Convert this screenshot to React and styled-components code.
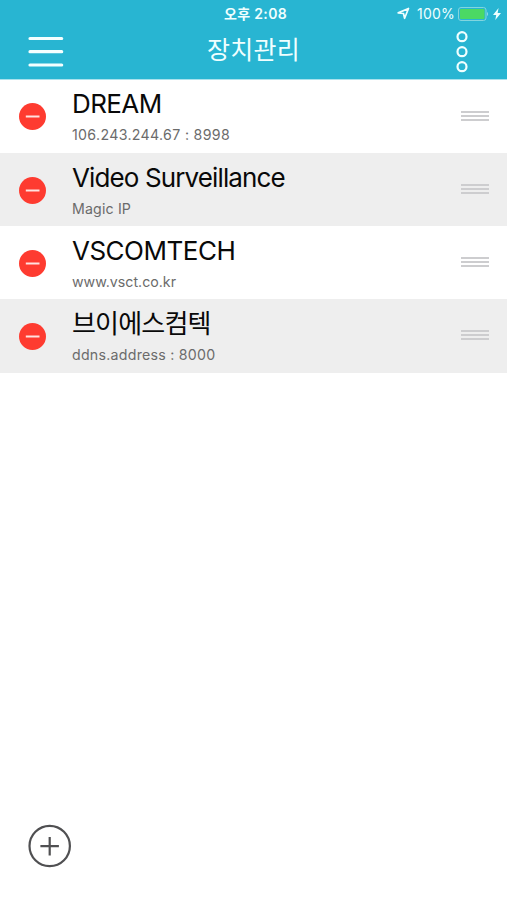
import React from "react";
import styled, { createGlobalStyle } from "styled-components";

const GlobalStyle = createGlobalStyle`
  * { box-sizing: border-box; }
  body {
    margin: 0;
    background: #fff;
    font-family: Inter, "Noto Sans CJK KR", sans-serif;
  }
  button { border: 0; padding: 0; background: none; font: inherit; }
  svg { display: block; }
`;

const Screen = styled.main`
  display: flex;
  flex-direction: column;
  width: 100%;
  height: 900px;
  overflow: hidden;
  background: #fff;
`;

const Header = styled.header`
  height: 79.5px;
  flex: none;
  background: #28b5d2;
  border-bottom: 1px solid #a9e2ed;
  color: #f0ffff;
`;

const StatusBar = styled.div`
  display: grid;
  grid-template-columns: 1fr auto 1fr;
  align-items: center;
  height: 27px;
  padding: 0 6px 0 6px;
`;

const Clock = styled.time`
  grid-column: 2;
  padding-left: 4px;
  font-size: 14px;
  font-weight: 600;
  line-height: 20px;
  letter-spacing: 0.35px;
  white-space: nowrap;
`;

const StatusIcons = styled.div`
  display: flex;
  justify-content: flex-end;
  align-items: center;
`;

const Percent = styled.span`
  margin: 0 3px 0 7px;
  font-size: 14px;
  line-height: 20px;
  letter-spacing: 0.2px;
`;

const NavBar = styled.div`
  display: grid;
  grid-template-columns: 91px 1fr 91px;
  align-items: center;
  justify-items: center;
  height: 49px;
`;

const Title = styled.h1`
  margin: 0;
  padding-bottom: 3px;
  font-size: 25px;
  font-weight: 400;
  line-height: 40px;
  letter-spacing: 0.3px;
`;

const DeviceList = styled.ul`
  margin: 0;
  padding: 0;
  list-style: none;
`;

const DeviceRow = styled.li`
  display: grid;
  grid-template-columns: 72px 1fr 46px;
  height: 73.25px;
  background: ${(p) => (p.$shaded ? "#eeeeee" : "#ffffff")};
`;

const RemoveButton = styled.button`
  align-self: start;
  margin: 23.8px 0 0 19px;
  width: 27px;
  height: 27px;
`;

const DeviceInfo = styled.div`
  padding-top: 7.8px;
  white-space: nowrap;
`;

const DeviceName = styled.div`
  color: #090909;
  font-size: 26px;
  line-height: 34px;
  height: 34px;
  letter-spacing: ${(p) => p.$tracking};
`;

const DeviceAddress = styled.div`
  margin-top: 4px;
  color: #6b6b6b;
  font-size: 14.2px;
  line-height: 20px;
  letter-spacing: ${(p) => p.$tracking};
`;

const DragHandle = styled.div`
  display: flex;
  flex-direction: column;
  gap: 2px;
  width: 28px;
  margin-top: 31.2px;
`;

const DragLine = styled.span`
  height: 2px;
  background: #cdcdcf;
`;

const Footer = styled.footer`
  margin-top: auto;
  padding: 0 0 32px 28px;
`;

const AddButton = styled.button`
  display: block;
  width: 44px;
  height: 44px;
`;

const devices = [
  { name: "DREAM", address: "106.243.244.67 : 8998", nameTracking: "-0.6px", addressTracking: "0.32px" },
  { name: "Video Surveillance", address: "Magic IP", nameTracking: "-0.88px", addressTracking: "0.15px" },
  { name: "VSCOMTECH", address: "www.vsct.co.kr", nameTracking: "-0.5px", addressTracking: "0px" },
  { name: "브이에스컴텍", address: "ddns.address : 8000", nameTracking: "-0.8px", addressTracking: "0.25px" },
];

const LocationIcon = () => (
  <svg width="13" height="13" viewBox="0 0 13 13" fill="none" stroke="currentColor" strokeWidth="1.7" strokeLinejoin="round">
    <path d="M1.2 5.9 11.5 1.5 7.6 11.3 6.5 6.5Z" />
  </svg>
);

const BatteryIcon = () => (
  <svg width="31" height="14" viewBox="0 0 31 14">
    <rect x="0.5" y="0.5" width="27.5" height="13" rx="2.5" fill="none" stroke="#82d5df" />
    <rect x="2" y="2" width="24.5" height="10" rx="1" fill="#4bd964" />
    <path d="M29.2 5v4c1.2-.5 1.2-3.5 0-4Z" fill="#9fe1e8" />
  </svg>
);

const Bolt = styled.svg`
  width: 8px;
  height: 12px;
  margin-left: 4px;
  fill: currentColor;
`;

const BoltIcon = () => (
  <Bolt viewBox="0 0 8 12">
    <path d="M5.6 0 0 6.9h3.2L2.3 12 8 4.9H4.6Z" />
  </Bolt>
);

const MenuIcon = () => (
  <svg width="36" height="32" viewBox="0 0 36 32" stroke="#f4ffff" strokeWidth="3.2" strokeLinecap="round">
    <path d="M2 2.5h31.7M2 15.7h31.7M2 29h31.7" />
  </svg>
);

const MoreIcon = () => (
  <svg width="12" height="42" viewBox="0 0 12 42" fill="none" stroke="#f0ffff" strokeWidth="2.2">
    <circle cx="6" cy="5.7" r="4.5" />
    <circle cx="6" cy="20.7" r="4.5" />
    <circle cx="6" cy="35.7" r="4.5" />
  </svg>
);

const RemoveIcon = () => (
  <svg width="27" height="27" viewBox="0 0 27 27">
    <circle cx="13.5" cy="13.5" r="13.5" fill="#fe3b30" />
    <path d="M6.8 13.5h13.7" stroke="#ffe2df" strokeWidth="2" />
  </svg>
);

const AddIcon = () => (
  <svg width="44" height="44" viewBox="0 0 44 44" fill="none" stroke="#505052" strokeWidth="2.2">
    <circle cx="21.7" cy="22" r="20.2" />
    <path d="M12.4 22.2h18.5M21.7 13v18.5" />
  </svg>
);

export default function App() {
  return (
    <>
      <GlobalStyle />
      <Screen>
        <Header>
          <StatusBar>
            <Clock>오후 2:08</Clock>
            <StatusIcons>
              <LocationIcon />
              <Percent>100%</Percent>
              <BatteryIcon />
              <BoltIcon />
            </StatusIcons>
          </StatusBar>
          <NavBar>
            <button aria-label="메뉴"><MenuIcon /></button>
            <Title>장치관리</Title>
            <button aria-label="더보기"><MoreIcon /></button>
          </NavBar>
        </Header>
        <DeviceList>
          {devices.map((device, index) => (
            <DeviceRow key={device.name} $shaded={index % 2 === 1}>
              <RemoveButton aria-label="삭제"><RemoveIcon /></RemoveButton>
              <DeviceInfo>
                <DeviceName $tracking={device.nameTracking}>{device.name}</DeviceName>
                <DeviceAddress $tracking={device.addressTracking}>{device.address}</DeviceAddress>
              </DeviceInfo>
              <DragHandle><DragLine /><DragLine /><DragLine /></DragHandle>
            </DeviceRow>
          ))}
        </DeviceList>
        <Footer>
          <AddButton aria-label="추가"><AddIcon /></AddButton>
        </Footer>
      </Screen>
    </>
  );
}
